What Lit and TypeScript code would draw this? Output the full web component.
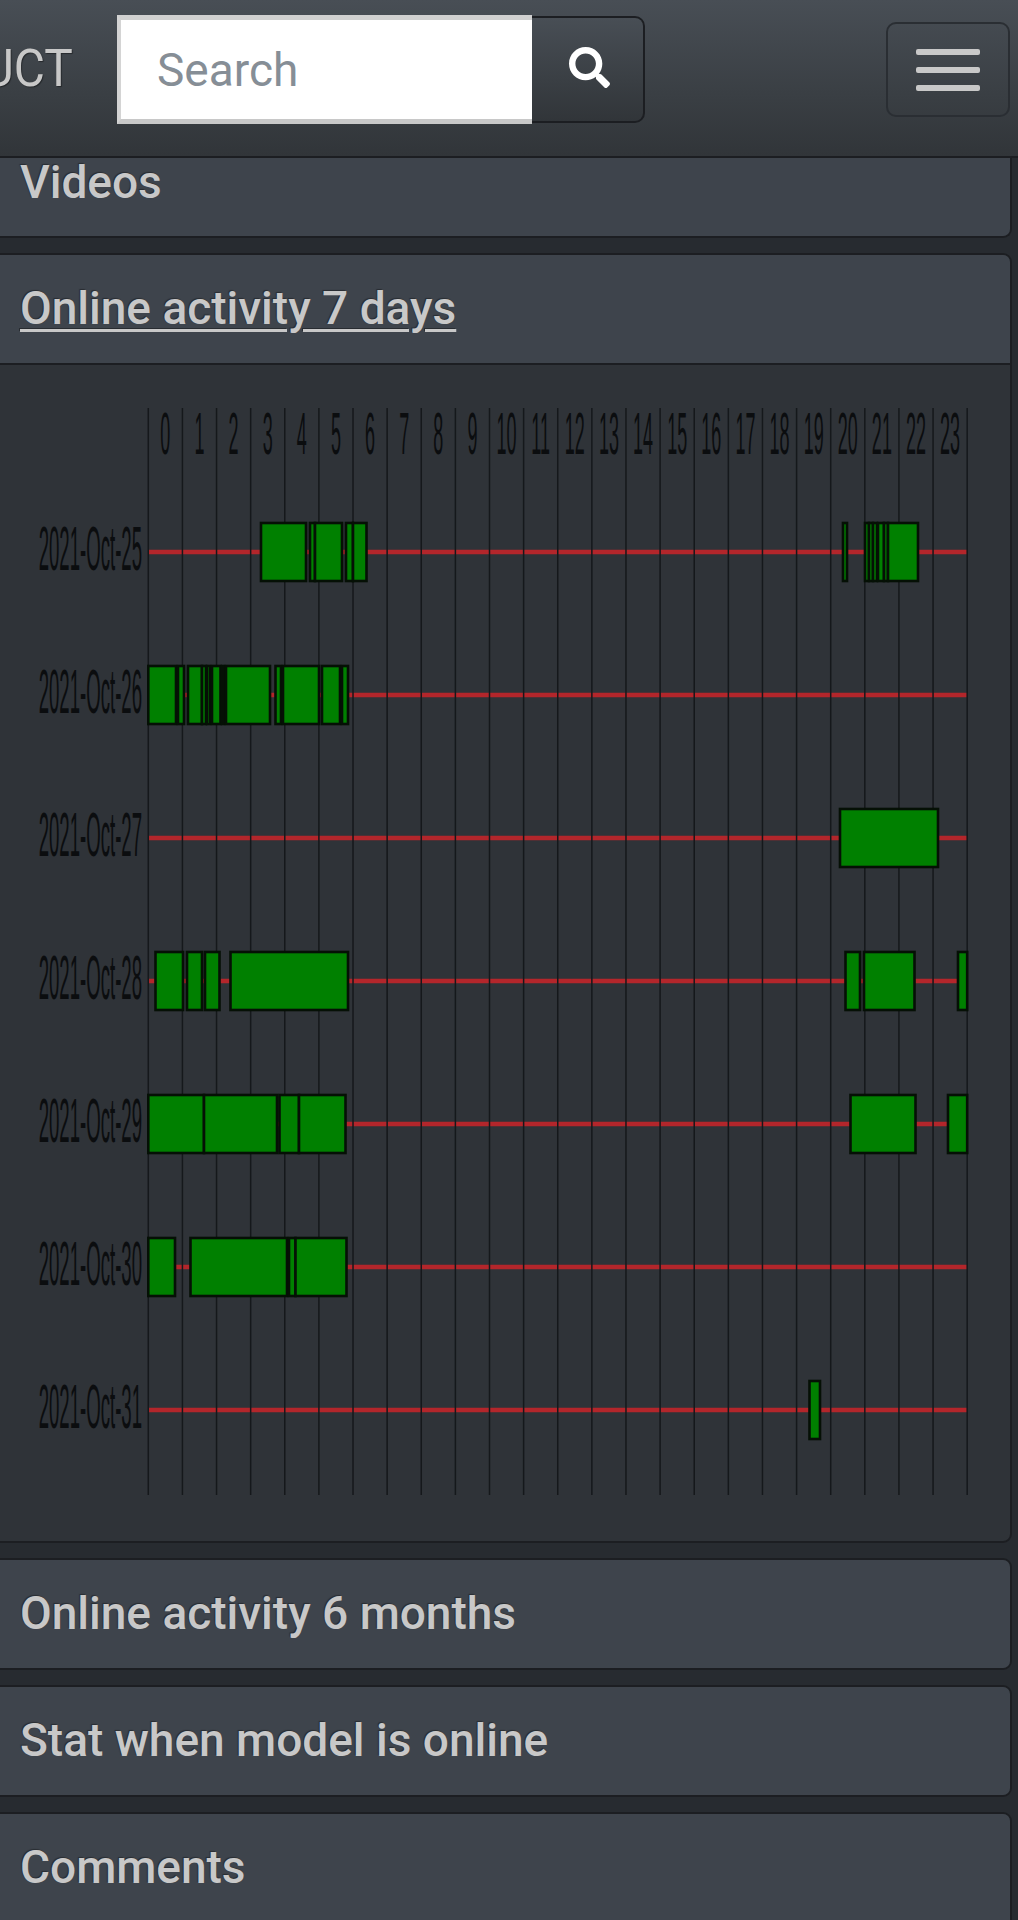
import { LitElement, html, css, svg } from "lit";
import { customElement } from "lit/decorators.js";

const HOURS = Array.from({ length: 24 }, (_, i) => i);
const X0 = 148.3;
const STEP = 34.12;
const X1 = X0 + STEP * 24;
const TOP = 408;
const BOTTOM = 1495;

// online spans per day, in chart pixels
const DAYS: { label: string; y: number; spans: number[][] }[] = [
  { label: "2021-Oct-25", y: 552, spans: [[261, 306], [310, 315], [315, 342], [346, 353], [353, 366.5], [843, 847], [865, 869], [869, 873], [873, 877], [878, 884], [884, 888], [888, 918]] },
  { label: "2021-Oct-26", y: 695, spans: [[148.3, 176], [178, 184], [188, 202], [202, 206], [207, 210], [212, 220.5], [222, 224], [226, 270], [275.5, 281], [283, 319], [322, 340], [342, 348]] },
  { label: "2021-Oct-27", y: 838, spans: [[840, 938]] },
  { label: "2021-Oct-28", y: 981, spans: [[155.5, 183], [187, 202], [205, 219.5], [230.5, 348], [845.5, 860], [864, 914.5], [958, X1]] },
  { label: "2021-Oct-29", y: 1124, spans: [[148.3, 204], [204, 277], [279.5, 299], [299, 345.5], [850.5, 915.5], [948, X1]] },
  { label: "2021-Oct-30", y: 1267, spans: [[148.3, 175], [190.5, 287], [289, 295.5], [295.5, 346.5]] },
  { label: "2021-Oct-31", y: 1410, spans: [[809.5, 820]] },
];

@customElement("activity-chart")
class ActivityChart extends LitElement {
  static styles = css`
    :host {
      display: block;
    }
    svg {
      display: block;
    }
    .hour,
    .day {
      font-family: "Liberation Sans", Arial, sans-serif;
      fill: #0b0d0f;
    }
    .hour {
      font-size: 60px;
      text-anchor: middle;
    }
    .day {
      font-size: 63px;
      text-anchor: end;
    }
    .grid {
      stroke: #15181b;
      stroke-width: 1.5;
    }
    .off {
      stroke: #b3262b;
      stroke-width: 4.5;
    }
    .on {
      fill: #008000;
      stroke: #051005;
      stroke-width: 2.6;
    }
  `;

  render() {
    return html`
      <svg width="1014" height=${BOTTOM - TOP} viewBox="0 ${TOP} 1014 ${BOTTOM - TOP}">
        ${DAYS.map((d) => svg`<line class="off" x1=${X0} x2=${X1} y1=${d.y} y2=${d.y}></line>`)}
        ${[...HOURS, 24].map((h) => svg`<line class="grid" x1=${X0 + h * STEP} x2=${X0 + h * STEP} y1=${TOP} y2=${BOTTOM}></line>`)}
        ${HOURS.map((h) => svg`<text class="hour" transform="translate(${X0 + (h + 0.5) * STEP} 454) scale(0.3 1)">${h}</text>`)}
        ${DAYS.map((d) => svg`
          <text class="day" transform="translate(142 ${d.y + 18}) scale(0.295 1)">${d.label}</text>
          ${d.spans.map(([a, b]) => svg`<rect class="on" x=${a} y=${d.y - 29} width=${b - a} height="58"></rect>`)}
        `)}
      </svg>
    `;
  }
}

@customElement("app-root")
class AppRoot extends LitElement {
  static styles = css`
    :host {
      display: block;
      background: #272b30;
      height: 1920px;
      overflow: hidden;
      font-family: Roboto, "Noto Sans", sans-serif;
      color: #c8c8c8;
    }
    .navbar {
      height: 158px;
      box-sizing: border-box;
      display: flex;
      align-items: flex-start;
      background: linear-gradient(#484e55, #3a3f44 60%, #313539);
      border-bottom: 2px solid #1c1e22;
      overflow: hidden;
    }
    .brand {
      flex: none;
      width: 117px;
      box-sizing: border-box;
      padding-top: 38px;
      display: flex;
      justify-content: flex-end;
      padding-right: 44px;
      font-size: 52px;
      line-height: 61px;
      white-space: nowrap;
      text-shadow: 1px 1px 1px rgba(0, 0, 0, 0.4);
    }
    .brand span {
      display: inline-block;
      transform: scaleX(0.92);
      transform-origin: right;
    }
    .search {
      flex: none;
      display: flex;
      margin-top: 15px;
    }
    .search input {
      width: 415px;
      height: 109px;
      box-sizing: border-box;
      border: none;
      border-top: 5px solid #d0d0d0;
      border-bottom: 5px solid #c8c8c8;
      border-left: 4px solid #d4d4d4;
      border-radius: 0;
      outline: none;
      padding: 0 0 0 36px;
      background: #fff;
      font-family: inherit;
      font-size: 46px;
    }
    .search input::placeholder {
      color: #868e96;
      opacity: 1;
    }
    .go {
      width: 113px;
      height: 107px;
      margin-top: 1px;
      box-sizing: border-box;
      border: 2px solid #1c1e22;
      border-left: none;
      border-radius: 0 10px 10px 0;
      background: linear-gradient(#484e55, #3a3f44 60%, #313539);
      display: flex;
      justify-content: center;
      padding: 29px 0 0 3px;
    }
    .go svg {
      width: 41px;
      height: 41px;
      fill: #fff;
    }
    .toggler {
      margin: 22px 8px 0 auto;
      width: 124px;
      height: 95px;
      box-sizing: border-box;
      border: 2px solid #2a2e33;
      border-radius: 10px;
      display: flex;
      flex-direction: column;
      justify-content: center;
      align-items: center;
      gap: 12px;
    }
    .toggler i {
      display: block;
      width: 64px;
      height: 6px;
      border-radius: 2px;
      background: #c8c8c8;
    }
    .cards {
      display: flex;
      flex-direction: column;
      gap: 15px;
      margin: 0 6px 0 -8px;
    }
    .card {
      border: 2px solid #1c1e22;
      border-radius: 9px;
      background: #2f3338;
      overflow: hidden;
      flex: none;
    }
    .card.clipped {
      border-top: none;
      border-radius: 0 0 9px 9px;
    }
    .head {
      height: 108px;
      box-sizing: border-box;
      padding: 0 0 0 26px;
      background: #3e444c;
      font-size: 46px;
      font-weight: 500;
      line-height: 106px;
      white-space: nowrap;
      text-shadow: -1px -1px 1px rgba(0, 0, 0, 0.35);
    }
    .head.open {
      height: 110px;
      border-bottom: 2px solid #1c1e22;
    }
    .head.open span {
      text-decoration: underline;
      text-decoration-thickness: 3px;
      text-underline-offset: 5px;
    }
    .clipped .head {
      height: 78px;
      line-height: 48px;
    }
    .last {
      height: 130px;
    }
    .body {
      padding: 43px 0 46px 6px;
    }
  `;

  render() {
    return html`
      <nav class="navbar">
        <div class="brand"><span>UCT</span></div>
        <div class="search">
          <input type="text" placeholder="Search" />
          <div class="go">
            <svg viewBox="0 0 512 512">
              <path d="M505 442.7L405.3 343c-4.5-4.5-10.6-7-17-7H372c27.6-35.3 44-79.7 44-128C416 93.1 322.9 0 208 0S0 93.1 0 208s93.1 208 208 208c48.3 0 92.7-16.4 128-44v16.3c0 6.4 2.5 12.5 7 17l99.7 99.7c9.4 9.4 24.6 9.4 33.9 0l28.3-28.3c9.4-9.4 9.4-24.6.1-34zM208 336c-70.7 0-128-57.2-128-128 0-70.7 57.2-128 128-128 70.7 0 128 57.2 128 128 0 70.7-57.2 128-128 128z"></path>
            </svg>
          </div>
        </div>
        <div class="toggler"><i></i><i></i><i></i></div>
      </nav>
      <div class="cards">
        <section class="card clipped">
          <div class="head"><span>Videos</span></div>
        </section>
        <section class="card">
          <div class="head open"><span>Online activity 7 days</span></div>
          <div class="body"><activity-chart></activity-chart></div>
        </section>
        <section class="card">
          <div class="head"><span>Online activity 6 months</span></div>
        </section>
        <section class="card">
          <div class="head"><span>Stat when model is online</span></div>
        </section>
        <section class="card last">
          <div class="head"><span>Comments</span></div>
        </section>
      </div>
    `;
  }
}
